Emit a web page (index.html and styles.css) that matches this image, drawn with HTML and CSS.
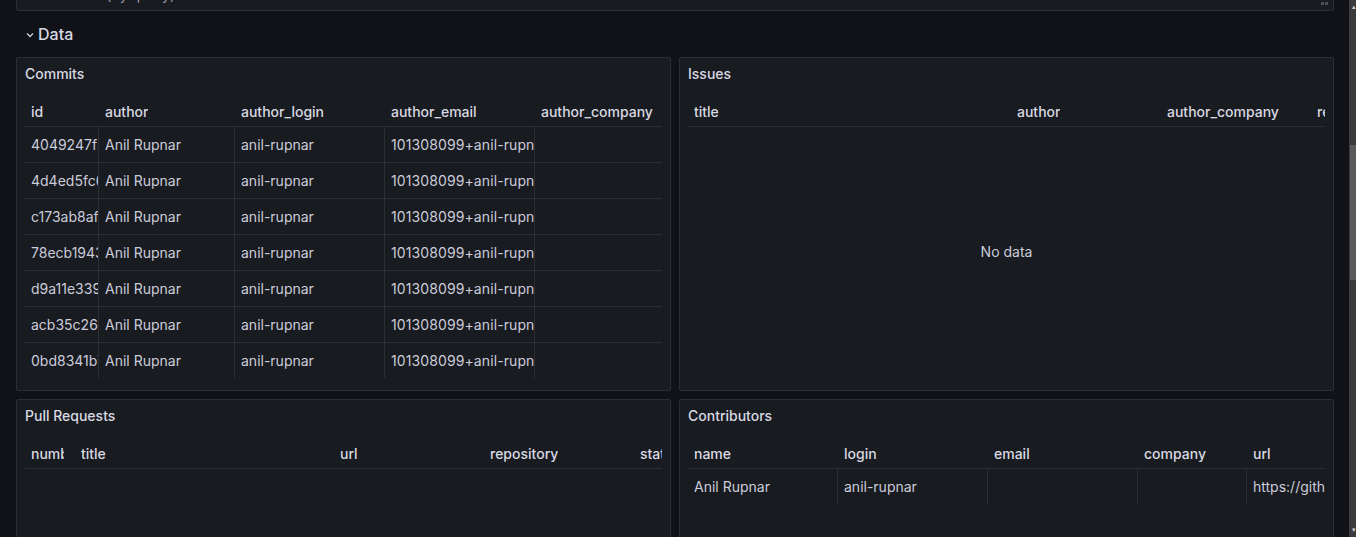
FILE: index.html
```html
<!DOCTYPE html>
<html lang="en">
<head>
<meta charset="utf-8">
<title>Data</title>
<link rel="stylesheet" href="styles.css">
</head>
<body>
<div class="app">
  <main class="dash">
    <div class="strip-panel">
      <div class="strip-text">Commits (by query)</div>
      <span class="handle"><i></i><i></i></span>
    </div>
    <div class="row-header">
      <svg class="chev" width="8" height="6" viewBox="0 0 8 6"><path d="M1 1.5 L4 4.5 L7 1.5" fill="none" stroke="#ccccdc" stroke-width="1.3"/></svg>
      <span class="row-title">Data</span>
    </div>
    <div class="grid">
      <section class="panel">
        <div class="panel-title">Commits</div>
        <div class="panel-body">
          <div class="tbl commits">
            <div class="tr th"><div class="c"><span>id</span></div><div class="c"><span>author</span></div><div class="c"><span>author_login</span></div><div class="c"><span>author_email</span></div><div class="c"><span>author_company</span></div></div>
            <div class="tr td"><div class="c">4049247f3a</div><div class="c">Anil Rupnar</div><div class="c">anil-rupnar</div><div class="c">101308099+anil-rupnar@users</div><div class="c"></div></div>
            <div class="tr td"><div class="c">4d4ed5fc6e</div><div class="c">Anil Rupnar</div><div class="c">anil-rupnar</div><div class="c">101308099+anil-rupnar@users</div><div class="c"></div></div>
            <div class="tr td"><div class="c">c173ab8af2</div><div class="c">Anil Rupnar</div><div class="c">anil-rupnar</div><div class="c">101308099+anil-rupnar@users</div><div class="c"></div></div>
            <div class="tr td"><div class="c">78ecb19431</div><div class="c">Anil Rupnar</div><div class="c">anil-rupnar</div><div class="c">101308099+anil-rupnar@users</div><div class="c"></div></div>
            <div class="tr td"><div class="c">d9a11e3391</div><div class="c">Anil Rupnar</div><div class="c">anil-rupnar</div><div class="c">101308099+anil-rupnar@users</div><div class="c"></div></div>
            <div class="tr td"><div class="c">acb35c26e0</div><div class="c">Anil Rupnar</div><div class="c">anil-rupnar</div><div class="c">101308099+anil-rupnar@users</div><div class="c"></div></div>
            <div class="tr td"><div class="c">0bd8341b7c</div><div class="c">Anil Rupnar</div><div class="c">anil-rupnar</div><div class="c">101308099+anil-rupnar@users</div><div class="c"></div></div>
          </div>
        </div>
      </section>
      <section class="panel">
        <div class="panel-title">Issues</div>
        <div class="panel-body">
          <div class="tbl issues">
            <div class="tr th"><div class="c"><span>title</span></div><div class="c"><span>author</span></div><div class="c"><span>author_company</span></div><div class="c"><span>repository</span></div></div>
            <div class="nodata">No data</div>
          </div>
        </div>
      </section>
      <section class="panel">
        <div class="panel-title">Pull Requests</div>
        <div class="panel-body">
          <div class="tbl pulls">
            <div class="tr th"><div class="c"><span>number</span></div><div class="c"><span>title</span></div><div class="c"><span>url</span></div><div class="c"><span>repository</span></div><div class="c"><span>state</span></div></div>
          </div>
        </div>
      </section>
      <section class="panel">
        <div class="panel-title">Contributors</div>
        <div class="panel-body">
          <div class="tbl contribs">
            <div class="tr th"><div class="c"><span>name</span></div><div class="c"><span>login</span></div><div class="c"><span>email</span></div><div class="c"><span>company</span></div><div class="c"><span>url</span></div></div>
            <div class="tr td"><div class="c">Anil Rupnar</div><div class="c">anil-rupnar</div><div class="c"></div><div class="c"></div><div class="c">https://github.com/anil-rupnar</div></div>
          </div>
        </div>
      </section>
    </div>
  </main>
  <div class="scrollbar">
    <div class="sb-arrow">&#x25B4;</div>
    <div class="sb-track"><div class="sb-thumb"></div></div>
    <div class="sb-arrow">&#x25BE;</div>
  </div>
</div>
</body>
</html>
```

FILE: styles.css
```css
* { box-sizing: border-box; }
html, body {
  margin: 0;
  padding: 0;
  height: 537px;
  overflow: hidden;
  background: #111217;
}
body {
  font-family: Inter, "Noto Sans", "Liberation Sans", sans-serif;
  font-size: 14px;
  color: #ccccdc;
}
.app {
  display: flex;
  height: 537px;
}
.dash {
  width: 1349px;
  padding: 0 15px 0 16px;
  overflow: hidden;
}
.strip-panel {
  height: 11px;
  width: 1318px;
  background: #181b1f;
  border: 1px solid #2b2e34;
  border-top: none;
  border-radius: 0 0 2px 2px;
  overflow: hidden;
  display: flex;
  justify-content: space-between;
}
.strip-text {
  margin-top: -15px;
  margin-left: 27px;
  font-size: 14px;
  line-height: 20px;
  color: #9a9aa8;
}
.handle {
  display: flex;
  gap: 1px;
  margin: 2px 5px 0 0;
  height: 3px;
}
.handle i {
  width: 3px;
  height: 3px;
  background: #4a4d55;
}
.row-header {
  height: 45px;
  display: flex;
  align-items: center;
  padding-left: 10px;
  gap: 4px;
}
.row-header + .grid { margin-top: 1px; }
.chev { margin-top: 2px; }
.row-title {
  font-size: 16px;
  font-weight: 500;
  color: #d8d9e3;
  line-height: 20px;
}
.grid {
  display: grid;
  grid-template-columns: 655px 655px;
  grid-auto-rows: 334px;
  gap: 8px;
}
.panel {
  background: #181b1f;
  border: 1px solid #2b2e34;
  border-radius: 2px;
  display: flex;
  flex-direction: column;
  overflow: hidden;
}
.panel-title {
  height: 32px;
  line-height: 32px;
  padding: 0 8px;
  font-weight: 500;
  font-size: 14px;
  color: #d8d9e3;
}
.panel-body {
  padding: 8px;
  flex: 1;
  overflow: hidden;
}
.tbl { width: 637px; overflow: hidden; }
.tr {
  display: grid;
  overflow: hidden;
}
.th {
  height: 29px;
  padding-bottom: 1px;
  border-bottom: 1px solid #2b2e34;
  font-weight: 500;
  color: #d8d9e3;
}
.td {
  height: 36px;
  border-bottom: 1px solid #2b2e34;
}
.td:last-child { border-bottom: none; height: 35px; }
.c {
  padding: 0 6px;
  white-space: nowrap;
  overflow: hidden;
  display: flex;
  align-items: center;
  border-left: 1px solid #2b2e34;
}
.th .c { border-left-color: transparent; }
.c:first-child { border-left: none; }
.th .c span {
  display: block;
  overflow: hidden;
  white-space: nowrap;
}
.commits .tr { grid-template-columns: 73px 136px 150px 150px 128px; }
.commits .td .c:nth-child(4) { letter-spacing: 0.1px; }
.issues .tr { grid-template-columns: 322px 150px 150px 150px; }
.pulls .tr { grid-template-columns: 49px 259px 150px 150px 150px; }
.pulls .th .c:first-child { padding-right: 10px; }
.contribs .tr { grid-template-columns: 149px 150px 150px 109px 150px; }
.nodata {
  height: 248px;
  display: flex;
  align-items: center;
  justify-content: center;
  color: #ccccdc;
}
.scrollbar {
  width: 7px;
  display: flex;
  flex-direction: column;
  background: #3b3b3d;
}
.sb-arrow {
  height: 14px;
  font-size: 7px;
  line-height: 14px;
  color: #d0d0d0;
  text-align: right;
  overflow: hidden;
}
.sb-track {
  flex: 1;
  padding-top: 131px;
}
.sb-thumb {
  height: 135px;
  width: 6px;
  margin-left: 1px;
  background: #5a5a5c;
}
```
